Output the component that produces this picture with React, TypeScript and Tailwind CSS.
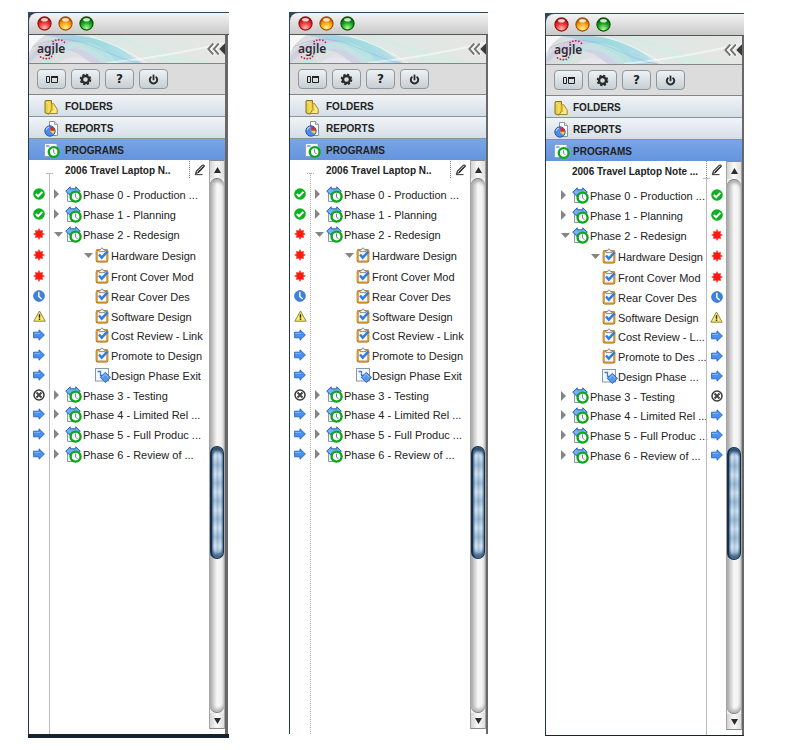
import React from "react";

type Status = "ok" | "alert" | "clock" | "warn" | "next" | "cancel";
type Kind = "phase" | "task" | "gate";

interface Row {
  label: string;
  shortLabel?: string;
  kind: Kind;
  status: Status;
  toggle?: "open" | "closed";
  height: string;
}

const rows: Row[] = [
  { label: "Phase 0 - Production ...", kind: "phase", status: "ok", toggle: "closed", height: "h-5" },
  { label: "Phase 1 - Planning", kind: "phase", status: "ok", toggle: "closed", height: "h-5" },
  { label: "Phase 2 - Redesign", kind: "phase", status: "alert", toggle: "open", height: "h-5" },
  { label: "Hardware Design", kind: "task", status: "alert", toggle: "open", height: "h-[22px]" },
  { label: "Front Cover Mod", kind: "task", status: "alert", height: "h-5" },
  { label: "Rear Cover Des", kind: "task", status: "clock", height: "h-5" },
  { label: "Software Design", kind: "task", status: "warn", height: "h-[19px]" },
  { label: "Cost Review - Link", shortLabel: "Cost Review - L...", kind: "task", status: "next", height: "h-5" },
  { label: "Promote to Design", shortLabel: "Promote to Des ...", kind: "task", status: "next", height: "h-5" },
  { label: "Design Phase Exit", shortLabel: "Design Phase ...", kind: "gate", status: "next", height: "h-5" },
  { label: "Phase 3 - Testing", kind: "phase", status: "cancel", toggle: "closed", height: "h-[19px]" },
  { label: "Phase 4 - Limited Rel ...", kind: "phase", status: "next", toggle: "closed", height: "h-5" },
  { label: "Phase 5 - Full Produc ...", kind: "phase", status: "next", toggle: "closed", height: "h-5" },
  { label: "Phase 6 - Review of ...", kind: "phase", status: "next", toggle: "closed", height: "h-5" },
];

function StatusIcon({ status }: { status: Status }) {
  switch (status) {
    case "ok":
      return (
        <svg width="12" height="12" viewBox="0 0 12 12" role="img" aria-label="On track">
          <circle cx="6" cy="6" r="5.8" fill="#0bb11f" />
          <path d="M2.8 6 5.1 8.3 9.4 3.9" fill="none" stroke="#fff" strokeWidth="2" />
        </svg>
      );
    case "alert":
      return (
        <svg width="12" height="12" viewBox="0 0 12 12" role="img" aria-label="Alert">
          <path
            d="M6 .6 7 2.9 9.6 2.4 9.1 5 11.4 6 9.1 7 9.6 9.6 7 9.1 6 11.4 5 9.1 2.4 9.6 2.9 7 .6 6 2.9 5 2.4 2.4 5 2.9Z"
            fill="#ff1a0d"
            stroke="#f01208"
            strokeWidth=".5"
          />
        </svg>
      );
    case "clock":
      return (
        <svg width="12" height="12" viewBox="0 0 12 12" role="img" aria-label="Scheduled">
          <circle cx="6" cy="6" r="5.4" fill="#3d83e0" stroke="#2a62b4" strokeWidth=".7" />
          <path d="M5.8 1.8V6.4L8.6 9" fill="none" stroke="#fff" strokeWidth="1.4" />
        </svg>
      );
    case "warn":
      return (
        <svg width="13" height="12" viewBox="0 0 13 12" role="img" aria-label="Warning">
          <path d="M6.5 1 12.2 11.2H.8Z" fill="#ffee63" stroke="#8e8648" strokeWidth="1" strokeLinejoin="round" />
          <path d="M6.5 4.2V7.8M6.5 8.6V10" stroke="#222" strokeWidth="1.4" />
        </svg>
      );
    case "cancel":
      return (
        <svg width="12" height="12" viewBox="0 0 12 12" role="img" aria-label="Cancelled">
          <circle cx="6" cy="6" r="5" fill="#fff" stroke="#3b3b3b" strokeWidth="1.5" />
          <path d="M3.5 3.5 8.5 8.5M8.5 3.5 3.5 8.5" stroke="#444" strokeWidth="2" />
        </svg>
      );
    default:
      return (
        <svg width="12" height="12" viewBox="0 0 12 12" role="img" aria-label="Upcoming">
          <path d="M.6 3.2H6V.8L11.4 6 6 11.2V8.8H.6Z" fill="#4a90f0" stroke="#2563bd" strokeWidth=".9" />
          <path d="M1.2 4.4H7" stroke="#8bbcf8" strokeWidth=".9" />
        </svg>
      );
  }
}

function PhaseIcon() {
  return (
    <svg className="shrink-0" width="17" height="17" viewBox="0 0 17 17" aria-hidden="true">
      <path d="M2.5 6V15.5H8" fill="#eef3fa" stroke="#8c96a6" strokeWidth="1" />
      <path d="M.7 5.2 5.2 .8V2.8H10.8V.8L15.3 5.2 10.8 9.4V7.4H5.2V9.4Z" fill="#76aef4" stroke="#2463b8" strokeWidth="1" />
      <circle cx="10.6" cy="10.6" r="5" fill="#fff" stroke="#0da61b" strokeWidth="2.4" />
      <path d="M10.5 7.6V10.9L12.4 12.8" fill="none" stroke="#5b7fae" strokeWidth="1" />
    </svg>
  );
}

function TaskIcon() {
  return (
    <svg className="shrink-0" width="15" height="16" viewBox="0 0 15 16" aria-hidden="true">
      <rect x="1.6" y="2.8" width="10.8" height="11.8" rx="1.2" fill="#f6f8fb" stroke="#9b5f06" strokeWidth="1.8" />
      <rect x="1.7" y="2.9" width="10.6" height="11.4" rx="1" fill="none" stroke="#e8a02c" strokeWidth="1.1" />
      <path d="M4 4.6V2.6H5.6Q5.8 1 7 1T8.4 2.6H10V4.6Z" fill="#f3f3ef" stroke="#77746c" strokeWidth=".8" />
      <path d="M4 7.4 6.7 10.6 12.6 4.4" fill="none" stroke="#2f7be0" strokeWidth="2.4" />
    </svg>
  );
}

function GateIcon() {
  return (
    <svg className="shrink-0" width="16" height="16" viewBox="0 0 16 16" aria-hidden="true">
      <rect x=".5" y="1.5" width="13" height="12.5" fill="#f4f8fd" stroke="#8b97a8" />
      <path d="M2.5 4.5H5.5V8.5H8" fill="none" stroke="#3e7fd6" strokeWidth="1.3" />
      <path d="M10.3 5.4 15.5 10.4 10.3 15.5 5.2 10.4Z" fill="#5797ec" stroke="#265fb2" strokeWidth=".9" />
      <path d="M7.2 10.2 10.3 7.2 13 9.8" fill="none" stroke="#a5ccfb" strokeWidth=".9" />
    </svg>
  );
}

function Toggle({ state, label }: { state?: "open" | "closed"; label: string }) {
  if (!state) return <span className="w-[11px] shrink-0" />;
  return (
    <button type="button" className="w-[11px] shrink-0 pb-0.5" aria-label={`Toggle ${label}`} aria-expanded={state === "open"}>
      {state === "open" ? (
        <svg width="9" height="5" viewBox="0 0 9 5">
          <path d="M0 0H9L4.5 5Z" fill="#858585" />
        </svg>
      ) : (
        <svg width="5" height="10" viewBox="0 0 5 10">
          <path d="M0 0V10L5 5Z" fill="#858585" />
        </svg>
      )}
    </button>
  );
}

function PencilButton() {
  return (
    <button type="button" aria-label="Edit program" className="flex h-full w-full items-center justify-center">
      <svg width="12" height="12" viewBox="0 0 12 12">
        <path d="M1.6 9.6 2.4 7.2 8.4 1.2Q9.6.6 10.5 2L4.6 8.4Z" fill="#dedede" stroke="#333" strokeWidth="1.1" strokeLinejoin="round" />
        <path d="M.8 10.6H8.5" stroke="#444" strokeWidth="1.1" />
        <path d="M4.2 8 10 2.4" stroke="#333" strokeWidth="1.2" />
      </svg>
    </button>
  );
}

function TrafficLight({ id, light, mid, dark, label }: { id: string; light: string; mid: string; dark: string; label: string }) {
  return (
    <button type="button" aria-label={label}>
      <svg width="15" height="15" viewBox="0 0 15 15">
        <defs>
          <radialGradient id={id} cx="50%" cy="85%" r="80%">
            <stop offset="0" stopColor={light} />
            <stop offset=".55" stopColor={mid} />
            <stop offset="1" stopColor={dark} />
          </radialGradient>
        </defs>
        <circle cx="7.5" cy="7.5" r="6.6" fill={`url(#${id})`} stroke={dark} strokeWidth="1.1" />
        <ellipse cx="7.5" cy="3.8" rx="3.4" ry="1.8" fill="#fff" opacity=".8" />
      </svg>
    </button>
  );
}

function Banner({ id }: { id: string }) {
  return (
    <div className="relative flex h-[29px] items-center justify-between overflow-hidden border-b border-[#858585] bg-[#e4e6e4] pl-2">
      <svg className="absolute inset-0 h-full w-full" viewBox="0 0 196 28" preserveAspectRatio="none" aria-hidden="true">
        <defs>
          <linearGradient id={`${id}-bg`} x1="0" x2="1" y1="0" y2="0">
            <stop offset="0" stopColor="#dadcde" />
            <stop offset=".45" stopColor="#dde8e4" />
            <stop offset="1" stopColor="#e6e6e4" />
          </linearGradient>
          <linearGradient id={`${id}-wave`} x1="0" x2="1" y1="0" y2="0">
            <stop offset="0" stopColor="#b3c8ea" />
            <stop offset=".5" stopColor="#93dadf" />
            <stop offset="1" stopColor="#b4dfee" />
          </linearGradient>
        </defs>
        <rect width="196" height="28" fill={`url(#${id}-bg)`} />
        <path d="M56 0Q104 3 136 28H190Q130 18 88 0Z" fill="#d3ebe2" opacity=".7" />
        <path d="M0 22Q14 4 38 2T82 14Q98 22 112 28H62Q46 14 30 14T0 28Z" fill="#cbc9e6" opacity=".7" />
        <path d="M14 0H44Q78 3 98 18L112 28H82Q64 8 14 0Z" fill={`url(#${id}-wave)`} opacity=".85" />
        <path d="M12 28Q26 7 50 7T88 28H72Q54 11 40 14T22 28Z" fill="#bdeae2" opacity=".65" />
        <path d="M30 28Q44 16 62 28Z" fill="#ebe6f1" opacity=".8" />
        <path d="M60 1Q90 10 118 28" fill="none" stroke="#fff" strokeWidth="1" opacity=".6" />
        <path d="M78 28Q136 22 196 8" fill="none" stroke="#fff" strokeWidth="2" opacity=".5" />
        <path d="M0 14Q30-4 66 12T112 28" fill="none" stroke="#9e9ed5" strokeWidth=".8" opacity=".5" />
        <path d="M0 0H16Q4 8 0 18Z" fill="#f7f7f7" />
      </svg>
      <div className="relative">
        <svg className="absolute -top-1 left-0 h-6 w-8" viewBox="0 0 32 24" aria-hidden="true">
          <path d="M16 4.6Q20 2 25 3.4 27.5 4.6 28 6.5" fill="none" stroke="#cf1c40" strokeWidth="1.6" strokeLinecap="round" strokeDasharray=".2 2.8" />
          <path d="M3.5 20Q8 22.5 12.5 21.3 15 20 15.8 16.5" fill="none" stroke="#cf1c40" strokeWidth="1.7" strokeLinecap="round" strokeDasharray=".2 2.8" />
        </svg>
        <span className="relative block font-['Noto_Sans',sans-serif] text-[12px] leading-4 font-semibold text-[#33272c]">agile</span>
      </div>
      <button type="button" aria-label="Collapse sidebar" className="relative">
        <svg width="18" height="14" viewBox="0 0 18 14">
          <path d="M7 1.5 1.8 7.2 7 12.8M12.5 1.5 7.3 7.2 12.5 12.8" fill="none" stroke="#fff" strokeWidth="3.4" />
          <path d="M6.3 1.5 1.3 7 6.3 12.5M11.8 1.5 6.8 7 11.8 12.5" fill="none" stroke="#747474" strokeWidth="1.9" />
          <path d="M18 1.2V12.8L12.3 7Z" fill="#3a3a3a" />
        </svg>
      </button>
    </div>
  );
}

function ToolButton({ label, children }: { label: string; children: React.ReactNode }) {
  return (
    <button
      type="button"
      aria-label={label}
      className="flex h-5 w-[29px] items-center justify-center rounded-[4px] border border-[#8d989e] bg-linear-to-b from-[#eef2f4] to-[#c6cfd4] text-[#222]"
    >
      {children}
    </button>
  );
}

function Toolbar() {
  return (
    <div className="flex h-[31px] items-center gap-[5px] border-b border-[#858585] bg-[#dcdcdc] pl-2">
      <ToolButton label="Layout">
        <svg width="13" height="7" viewBox="0 0 13 7">
          <path d="M1.5.5H4.5V6.5H1.5ZM6.5.5H12.5V6.5H6.5Z" fill="none" stroke="#222" />
          <path d="M6 1H13" stroke="#222" strokeWidth="2" />
        </svg>
      </ToolButton>
      <ToolButton label="Settings">
        <svg width="13" height="13" viewBox="0 0 13 13">
          <circle cx="6.5" cy="6.5" r="3.5" fill="none" stroke="#2b2b2b" strokeWidth="2.4" />
          <circle cx="6.5" cy="6.5" r="4.9" fill="none" stroke="#2b2b2b" strokeWidth="1.8" strokeDasharray="2.2 1.65" />
        </svg>
      </ToolButton>
      <ToolButton label="Help">
        <span className="font-['DejaVu_Sans',sans-serif] text-[12px] font-bold leading-3">?</span>
      </ToolButton>
      <ToolButton label="Log out">
        <svg width="11" height="11" viewBox="0 0 11 11">
          <path d="M3.4 2.7A3.7 3.7 0 1 0 7.6 2.7" fill="none" stroke="#2b2b2b" strokeWidth="2" />
          <path d="M5.5.6V6.2" stroke="#2b2b2b" strokeWidth="1.8" />
        </svg>
      </ToolButton>
    </div>
  );
}

function FolderIcon() {
  return (
    <svg width="16" height="16" viewBox="0 0 16 16" aria-hidden="true">
      <path d="M1 2 2 1.5H7.5V11L5 15.2 1 13.8Z" fill="#e9cf45" stroke="#80630f" strokeWidth=".9" strokeLinejoin="round" />
      <path d="M7.5 4.5H9.5L13.2 10.2V14.5H5L7.5 11.5Z" fill="#fae98a" stroke="#9b7b1d" strokeWidth=".9" strokeLinejoin="round" />
      <path d="M7.5 4.5H9.2V12H7.3Z" fill="#dfbd33" />
      <path d="M2 3.5 5 4.2V13.5" fill="none" stroke="#f8e67c" strokeWidth="1" />
    </svg>
  );
}

function ReportIcon() {
  return (
    <svg width="16" height="16" viewBox="0 0 16 16" aria-hidden="true">
      <path d="M5.5.5H10.5L13.5 3.5V14.5H5.5Z" fill="#fff" stroke="#7d8794" strokeWidth=".9" />
      <path d="M10.5.5V3.5H13.5" fill="#dde3ec" stroke="#7d8794" strokeWidth=".8" />
      <circle cx="6" cy="10" r="5.2" fill="#4b8be8" stroke="#1e51a4" strokeWidth=".9" />
      <path d="M6.4 9.8V5.4A4.4 4.4 0 0 1 10.6 9.8Z" fill="#e8291c" />
      <path d="M5.6 9.8 10.6 9.8A4.6 4.6 0 0 1 9.3 13Z" fill="#ffcf3a" />
      <path d="M2.2 9A4 4 0 0 1 5 6.2" fill="none" stroke="#b2d3ff" strokeWidth="1.2" />
    </svg>
  );
}

function ProgramIcon() {
  return (
    <svg width="16" height="16" viewBox="0 0 16 16" aria-hidden="true">
      <rect x=".5" y=".5" width="12.5" height="13" fill="#f7fafe" stroke="#8398ba" strokeWidth=".8" />
      <path d="M2 3H5.5" stroke="#4a86df" strokeWidth="1.2" />
      <circle cx="9.7" cy="9" r="4.9" fill="#fff" stroke="#0da61b" strokeWidth="2.4" />
      <path d="M9.6 6.2V9.2L11.4 11.1" fill="none" stroke="#5b7fae" strokeWidth="1" />
    </svg>
  );
}

function Sections({ compact }: { compact?: boolean }) {
  const spacing = compact ? "gap-[3px] pl-2" : "gap-[5px] pl-[15px]";
  const base = "flex w-full items-center pt-0.5 text-[10px] leading-3 font-bold text-[#222]";
  return (
    <nav aria-label="Sections">
      <button type="button" className={`${base} ${spacing} h-[22px] border-b border-[#8b9299] bg-linear-to-b from-[#f0f4f7] to-[#d5dee7]`}>
        <FolderIcon />
        FOLDERS
      </button>
      <button type="button" className={`${base} ${spacing} h-[22px] border-b border-[#8b9299] bg-linear-to-b from-[#f0f4f7] to-[#d5dee7]`}>
        <ReportIcon />
        REPORTS
      </button>
      <button type="button" aria-current="true" className={`${base} ${spacing} h-[21px] bg-linear-to-b from-[#79a5e8] to-[#6494dc]`}>
        <ProgramIcon />
        PROGRAMS
      </button>
    </nav>
  );
}

function ScrollBar() {
  return (
    <div className="mb-[5px] flex w-4 shrink-0 flex-col border-x border-[#a3a3a3] bg-[#ededed]">
      <button type="button" aria-label="Scroll up" className="flex h-[18px] items-center justify-center border-t border-[#8a8a8a] bg-linear-to-r from-[#d4d4d4] via-[#fafafa] to-[#dedede]">
        <svg width="7" height="6" viewBox="0 0 7 6">
          <path d="M3.5 0 7 6H0Z" fill="#2b2b2b" />
        </svg>
      </button>
      <div
        role="scrollbar"
        aria-label="Scroll programs"
        aria-valuenow={64}
        className="flex flex-1 flex-col rounded-[7px] border-t border-b border-[#777] bg-linear-to-r from-[#a8a8a8] via-[#f8f8f8] to-[#efefef] shadow-[inset_0_3px_3px_#b0b0b0,inset_0_-3px_3px_#b8b8b8]"
      >
        <div className="grow-[268]" />
        <div className="h-[113px] rounded-[7px] border border-l-2 border-[#16304a] bg-[repeating-linear-gradient(180deg,rgba(70,110,150,0.25)_0px,rgba(255,255,255,0.25)_9px,rgba(70,110,150,0.25)_18px),linear-gradient(90deg,#7b9dbd,#d3e5f4_22%,#9dbbd6_50%,#cfe4f6_80%,#a9c6e0)] shadow-[inset_0_4px_3px_#2d4f72,inset_0_-4px_3px_#44698c]" />
        <div className="grow-[153]" />
      </div>
      <button type="button" aria-label="Scroll down" className="flex h-4 items-center justify-center border-b border-[#8a8a8a] bg-linear-to-r from-[#d4d4d4] via-[#fafafa] to-[#dedede]">
        <svg width="7" height="6" viewBox="0 0 7 6">
          <path d="M0 0H7L3.5 6Z" fill="#2b2b2b" />
        </svg>
      </button>
    </div>
  );
}

function StatusList() {
  return (
    <ul>
      {rows.map((row) => (
        <li key={row.label} className={`flex items-center justify-center ${row.height}`}>
          <StatusIcon status={row.status} />
        </li>
      ))}
    </ul>
  );
}

function Tree({ short }: { short?: boolean }) {
  return (
    <ul className={short ? "pl-[15px]" : "pl-1"}>
      {rows.map((row) => (
        <li
          key={row.label}
          className={`flex items-center text-[11px] leading-4 whitespace-nowrap text-[#222] ${row.height} ${row.kind === "phase" ? "" : "pl-[30px]"}`}
        >
          <Toggle state={row.toggle} label={row.label} />
          <span className={`shrink-0 pb-0.5 ${row.kind === "phase" ? "w-[18px]" : "w-4"}`}>
            {row.kind === "phase" ? <PhaseIcon /> : row.kind === "task" ? <TaskIcon /> : <GateIcon />}
          </span>
          <span>{short && row.shortLabel ? row.shortLabel : row.label}</span>
        </li>
      ))}
    </ul>
  );
}

function LeftStatusBody({ dotted }: { dotted?: boolean }) {
  const line = dotted ? "border-dotted border-[#aaa]" : "border-[#bbb]";
  return (
    <>
      <div className="flex w-[21px] shrink-0 flex-col pt-[13px]">
        <div className={`relative flex-1 border-r pt-[11px] ${line}`}>
          <span className={`absolute top-0 -right-1 w-[7px] border-t ${line}`} />
          <StatusList />
        </div>
      </div>
      <div className="min-w-0 flex-1">
        <div className="flex h-[25px] items-start justify-between pl-[15px]">
          <h2 className="text-[10px] leading-[22px] font-bold whitespace-nowrap text-[#222]">2006 Travel Laptop N..</h2>
          <div className="mt-px h-[17px] w-5 border-l border-dotted border-[#888]">
            <PencilButton />
          </div>
        </div>
        <Tree />
      </div>
    </>
  );
}

function RightStatusBody() {
  return (
    <>
      <div className="min-w-0 flex-1">
        <h2 className="h-[25px] pl-[26px] text-[10px] leading-[22px] font-bold whitespace-nowrap text-[#222]">
          2006 Travel Laptop Note ...
        </h2>
        <Tree short />
      </div>
      <div className="flex w-5 shrink-0 flex-col">
        <div className="h-[17px] border-l border-dotted border-[#888]">
          <PencilButton />
        </div>
        <div className="relative flex-1 border-l border-[#bbb] pt-[7px]">
          <span className="absolute top-0 -left-1 w-[7px] border-t border-[#bbb]" />
          <StatusList />
        </div>
      </div>
    </>
  );
}

interface PanelProps {
  id: string;
  className: string;
  edge: string;
  compact?: boolean;
  children: React.ReactNode;
}

function Panel({ id, className, edge, compact, children }: PanelProps) {
  return (
    <section className={`flex min-w-0 flex-col border-[#142330] ${className}`}>
      <header className="bg-[#30475d] pt-px pl-px">
        <div className="flex h-[22px] items-center gap-1.5 rounded-tl-[8px] border-b border-[#555] bg-linear-to-b from-[#f4f4f4] to-[#c9c9c9] pl-2">
          <TrafficLight id={`${id}-r`} light="#ffc0b8" mid="#ee3030" dark="#8c1010" label="Close" />
          <TrafficLight id={`${id}-y`} light="#fff890" mid="#ffa011" dark="#a04c05" label="Minimize" />
          <TrafficLight id={`${id}-g`} light="#b4fa9c" mid="#16a51e" dark="#085008" label="Zoom" />
        </div>
      </header>
      <div className={`flex flex-1 border-l border-l-[#22374a] ${edge}`}>
        <div className="flex min-w-0 flex-1 flex-col">
          <Banner id={id} />
          <Toolbar />
          <Sections compact={compact} />
          <div className="flex flex-1 bg-white">
            {children}
            <ScrollBar />
          </div>
        </div>
      </div>
    </section>
  );
}

export default function App() {
  return (
    <main className="flex min-h-screen bg-white py-3 pr-14 pl-7 font-['Liberation_Sans',Arial,sans-serif]">
      <Panel id="solid" className="flex-[201_1_0%] border-b-4" edge="mr-px border-r-3 border-r-[#686868]">
        <LeftStatusBody />
      </Panel>
      <Panel id="dotted" className="mb-1 ml-[60px] flex-[199_1_0%]" edge="border-r-2 border-r-[#686868]">
        <LeftStatusBody dotted />
      </Panel>
      <Panel id="right" className="mt-px mb-0.5 ml-[57px] flex-[199_1_0%] border-b" edge="border-r-2 border-r-[#686868]" compact>
        <RightStatusBody />
      </Panel>
    </main>
  );
}
